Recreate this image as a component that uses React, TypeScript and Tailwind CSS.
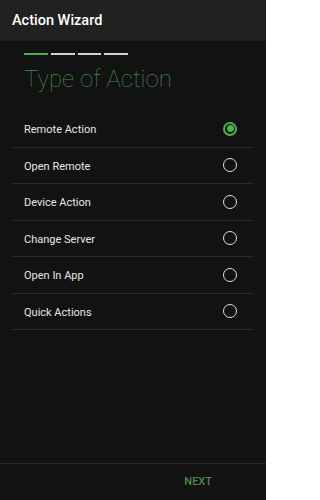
const options = ["Remote Action", "Open Remote", "Device Action", "Change Server", "Open In App", "Quick Actions"];

export default function App() {
  const selected = 0;
  return (
    <div className="w-[266px] h-[500px] flex flex-col bg-[#121212] font-['Roboto',sans-serif] overflow-hidden">
      <div className="h-[41px] shrink-0 bg-[#212121] flex items-center px-3">
        <h1 className="text-[14.5px] font-medium text-white">Action Wizard</h1>
      </div>

      <div className="flex-1 flex flex-col">
        <div className="px-6 pt-[12px] flex gap-[3px]">
          <div className="w-[24px] h-[2px] bg-[#4caf50]" />
          <div className="w-[24px] h-[2px] bg-[#d0d0d0]" />
          <div className="w-[23px] h-[2px] bg-[#d0d0d0]" />
          <div className="w-[24px] h-[2px] bg-[#d0d0d0]" />
        </div>
        <h2 className="px-6 mt-[4px] text-[24px] leading-[40px] font-thin text-[#4a8c4a]">Type of Action</h2>

        <div className="mt-[12px] mx-3">
          {options.map((o, i) => (
            <div key={o} className="h-[36.5px] flex items-center justify-between pl-3 pr-[17px] border-b border-[#2a2a2a]">
              <span className="text-[11px] pt-[3px] text-[#e6e6e6]">{o}</span>
              {i === selected ? (
                <span className="w-[14px] h-[14px] rounded-full border-2 border-[#4caf50] flex items-center justify-center">
                  <span className="w-[7px] h-[7px] rounded-full bg-[#4caf50]" />
                </span>
              ) : (
                <span className="w-[14px] h-[14px] rounded-full border-[1.5px] border-[#e0e0e0]" />
              )}
            </div>
          ))}
        </div>
      </div>

      <div className="h-[37px] shrink-0 border-t border-[#262626] flex items-center justify-end pr-[54px]">
        <span className="text-[11px] font-medium text-[#4a8c4a]">NEXT</span>
      </div>
    </div>
  );
}
